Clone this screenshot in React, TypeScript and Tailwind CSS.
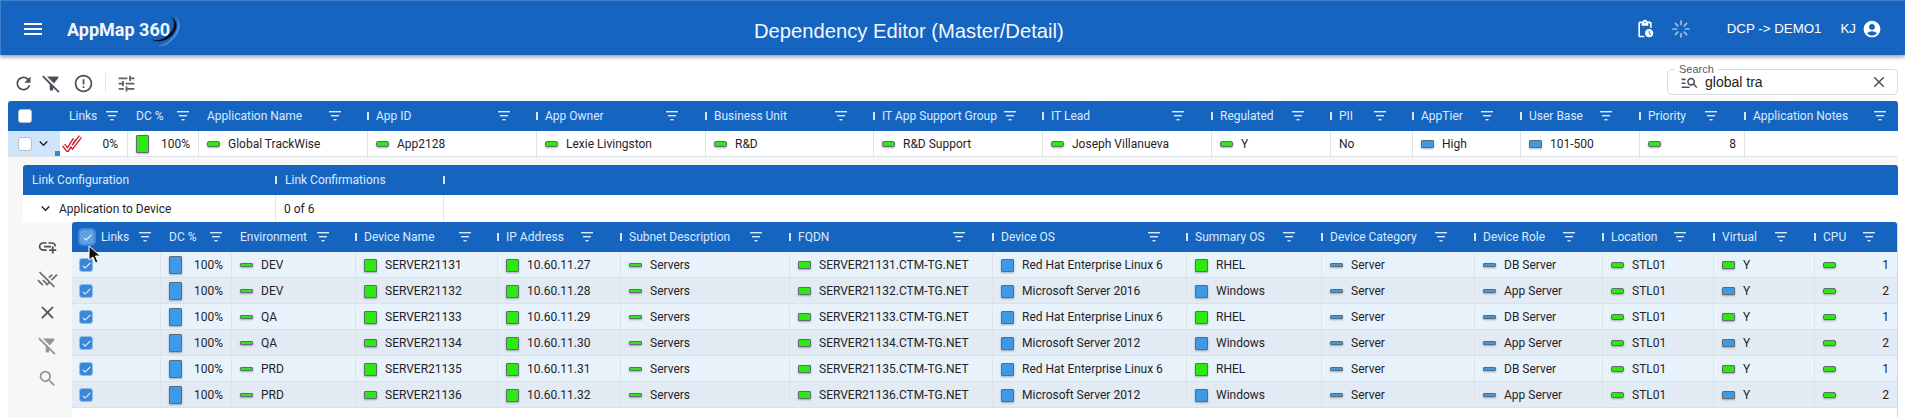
import { MdMenu, MdRefresh, MdErrorOutline, MdTune, MdManageSearch, MdClose, MdKeyboardArrowDown, MdPendingActions, MdAccountCircle, MdAddLink, MdRemoveDone, MdSearch, MdCheck, MdFilterAltOff } from 'react-icons/md';

const uiFont = "font-['Roboto',sans-serif]";

type Col = { label: string; w: string; pr: string };
type Mark = 'bar' | 'mid' | 'flat' | 'square' | 'tall';
type Cell = { text?: string; mark?: Mark; color?: 'g' | 'b'; right?: boolean };

const outerCols: Col[] = [
  { label: 'Links', w: 'w-[67px]', pr: 'pr-[9px]' },
  { label: 'DC %', w: 'w-[71px]', pr: 'pr-[9px]' },
  { label: 'Application Name', w: 'w-[169px]', pr: 'pr-[26px]' },
  { label: 'App ID', w: 'w-[169px]', pr: 'pr-[26px]' },
  { label: 'App Owner', w: 'w-[169px]', pr: 'pr-[27px]' },
  { label: 'Business Unit', w: 'w-[168px]', pr: 'pr-[26px]' },
  { label: 'IT App Support Group', w: 'w-[169px]', pr: 'pr-[26px]' },
  { label: 'IT Lead', w: 'w-[169px]', pr: 'pr-[27px]' },
  { label: 'Regulated', w: 'w-[119px]', pr: 'pr-[26px]' },
  { label: 'PII', w: 'w-[82px]', pr: 'pr-[26px]' },
  { label: 'AppTier', w: 'w-[108px]', pr: 'pr-[27px]' },
  { label: 'User Base', w: 'w-[119px]', pr: 'pr-[27px]' },
  { label: 'Priority', w: 'w-[105px]', pr: 'pr-[27px]' },
  { label: 'Application Notes', w: 'w-[154px]', pr: 'pr-[12px]' },
];

const outerRow: Cell[] = [
  { text: '0%', right: true },
  { text: '100%', mark: 'tall', color: 'g', right: true },
  { text: 'Global TrackWise', mark: 'bar', color: 'g' },
  { text: 'App2128', mark: 'bar', color: 'g' },
  { text: 'Lexie Livingston', mark: 'bar', color: 'g' },
  { text: 'R&D', mark: 'bar', color: 'g' },
  { text: 'R&D Support', mark: 'bar', color: 'g' },
  { text: 'Joseph Villanueva', mark: 'bar', color: 'g' },
  { text: 'Y', mark: 'bar', color: 'g' },
  { text: 'No' },
  { text: 'High', mark: 'mid', color: 'b' },
  { text: '101-500', mark: 'mid', color: 'b' },
  { text: '8', mark: 'bar', color: 'g', right: true },
  {},
];

const innerCols: Col[] = [
  { label: 'Links', w: 'w-[88px]', pr: 'pr-[9px]' },
  { label: 'DC %', w: 'w-[71px]', pr: 'pr-[9px]' },
  { label: 'Environment', w: 'w-[124px]', pr: 'pr-[26px]' },
  { label: 'Device Name', w: 'w-[142px]', pr: 'pr-[26px]' },
  { label: 'IP Address', w: 'w-[123px]', pr: 'pr-[27px]' },
  { label: 'Subnet Description', w: 'w-[169px]', pr: 'pr-[27px]' },
  { label: 'FQDN', w: 'w-[203px]', pr: 'pr-[27px]' },
  { label: 'Device OS', w: 'w-[194px]', pr: 'pr-[26px]' },
  { label: 'Summary OS', w: 'w-[135px]', pr: 'pr-[26px]' },
  { label: 'Device Category', w: 'w-[153px]', pr: 'pr-[27px]' },
  { label: 'Device Role', w: 'w-[128px]', pr: 'pr-[27px]' },
  { label: 'Location', w: 'w-[111px]', pr: 'pr-[27px]' },
  { label: 'Virtual', w: 'w-[101px]', pr: 'pr-[27px]' },
  { label: 'CPU', w: 'w-[83px]', pr: 'pr-[22px]' },
];

const devices = [
  { env: 'DEV', name: 'SERVER21131', nameMark: 'square', ip: '10.60.11.27', os: 'Red Hat Enterprise Linux 6', sum: 'RHEL', role: 'DB Server', virtual: 'g', cpu: '1' },
  { env: 'DEV', name: 'SERVER21132', nameMark: 'square', ip: '10.60.11.28', os: 'Microsoft Server 2016', sum: 'Windows', role: 'App Server', virtual: 'b', cpu: '2' },
  { env: 'QA', name: 'SERVER21133', nameMark: 'square', ip: '10.60.11.29', os: 'Red Hat Enterprise Linux 6', sum: 'RHEL', role: 'DB Server', virtual: 'g', cpu: '1' },
  { env: 'QA', name: 'SERVER21134', nameMark: 'mid', ip: '10.60.11.30', os: 'Microsoft Server 2012', sum: 'Windows', role: 'App Server', virtual: 'b', cpu: '2' },
  { env: 'PRD', name: 'SERVER21135', nameMark: 'square', ip: '10.60.11.31', os: 'Red Hat Enterprise Linux 6', sum: 'RHEL', role: 'DB Server', virtual: 'g', cpu: '1' },
  { env: 'PRD', name: 'SERVER21136', nameMark: 'mid', ip: '10.60.11.32', os: 'Microsoft Server 2012', sum: 'Windows', role: 'App Server', virtual: 'b', cpu: '2' },
];

function StatusMark({ mark, color }: { mark: Mark; color: 'g' | 'b' }) {
  const size = {
    flat: 'w-[13px] h-[4px] rounded-[1px]',
    bar: 'w-[13px] h-[6px] rounded-[2px]',
    mid: 'w-[13px] h-[8px] rounded-[1px]',
    square: 'w-[13px] h-[13px] rounded-[1px]',
    tall: 'w-[13px] h-[18px] rounded-[1px]',
  }[mark];
  const fill = color === 'g' ? 'bg-[#2bea10]' : 'bg-[#3e9ae6]';
  return <span className={`shrink-0 ${size} ${fill} border border-[#5f6b75] shadow-[0_1px_2px_rgba(0,0,0,0.3)]`} />;
}

function SortLines() {
  return (
    <svg width="12" height="10" viewBox="0 0 12 10" className="shrink-0 block">
      <rect x="0" y="0" width="12" height="1.4" fill="#dbeafe" />
      <rect x="2" y="4" width="8" height="1.4" fill="#dbeafe" />
      <rect x="4.5" y="8" width="3" height="1.4" fill="#dbeafe" />
    </svg>
  );
}

function Handle() {
  return <span className="absolute left-0 top-[11px] h-[8px] w-[2px] bg-[#d6e6f7]" />;
}

function HeaderCell({ col, handle, lead }: { col: Col; handle: boolean; lead?: boolean }) {
  return (
    <div className={`${col.w} ${col.pr} shrink-0 h-full flex items-center relative pl-[9px]`}>
      {handle && <Handle />}
      {lead && (
        <span className="mr-[7px] -ml-px w-[14px] h-[14px] rounded-[3px] bg-[#5f9fe3] shadow-[0_0_0_2px_rgba(120,170,230,0.5)] flex items-center justify-center shrink-0">
          <MdCheck className="text-white" size={11} />
        </span>
      )}
      <span className={`text-[12px] text-[#dbeafe] whitespace-nowrap ${uiFont}`}>{col.label}</span>
      <span className="ml-auto">
        <SortLines />
      </span>
    </div>
  );
}

function DataCell({ col, cell, bordered }: { col: Col; cell: Cell; bordered: boolean }) {
  return (
    <div className={`${col.w} shrink-0 h-full flex items-center pl-[8px] pr-[8px] gap-[8px] ${bordered ? 'border-l border-[#dde3e9]' : ''}`}>
      {cell.mark && <StatusMark mark={cell.mark} color={cell.color ?? 'g'} />}
      {cell.text && (
        <span className={`text-[12px] text-[#1f2328] whitespace-nowrap ${uiFont} ${cell.right ? 'ml-auto' : ''}`}>{cell.text}</span>
      )}
    </div>
  );
}

function Checkbox({ checked }: { checked?: boolean }) {
  if (checked) {
    return (
      <span className="w-[14px] h-[14px] rounded-[3px] bg-[#3c86d8] border border-[#8cc0f0] flex items-center justify-center shrink-0">
        <MdCheck className="text-white" size={11} />
      </span>
    );
  }
  return <span className="w-[14px] h-[14px] rounded-[3px] bg-white border border-[#b8c0c8] shrink-0" />;
}

function RedChecks() {
  const d = 'M1.5 10 L5.5 15 L12.5 4 M9 10 L10.5 12 L18.5 1.5';
  return (
    <svg width="20" height="17" viewBox="0 0 20 17" className="shrink-0">
      <path d={d} fill="none" stroke="#c4202a" strokeWidth="4" strokeLinejoin="miter" />
      <path d={d} fill="none" stroke="#ffffff" strokeWidth="1.3" strokeLinejoin="miter" />
    </svg>
  );
}

function LoadingDots() {
  return (
    <svg width="18" height="18" viewBox="0 0 18 18" className="text-[#9dbfe6] block" stroke="currentColor" strokeWidth="1.7" strokeLinecap="round">
      <path d="M9 1v3.5M9 13.5V17M1 9h3.5M13.5 9H17M3.4 3.4l2.4 2.4M12.2 12.2l2.4 2.4M3.4 14.6l2.4-2.4M12.2 5.8l2.4-2.4" />
    </svg>
  );
}

function Swoosh() {
  return (
    <svg width="30" height="33" viewBox="0 0 30 33" className="-ml-[19px] mt-[3px] shrink-0">
      <path d="M23 1 C30 6 31 15 24 23 C18 30 12 33 7 32 C14 31 20 26 24 20 C28 13 28 6 23 1 Z" fill="#4b93dc" />
      <path d="M19 2 C26 6 28 13 22 20 C16 27 7 30 0 25 C7 28 14 25 19 19 C24 13 25 7 19 2 Z" fill="#0d0f14" />
    </svg>
  );
}

export default function App() {
  return (
    <div className="w-[1905px] h-[417px] overflow-hidden bg-white flex flex-col">
      <header className="h-[55px] shrink-0 bg-[#1565c0] shadow-[0_2px_4px_rgba(0,0,0,0.4)] flex items-center pl-[20px] pr-[23px] pt-[2px] relative z-10 border-t border-l border-[#3f81cd]">
        <MdMenu className="text-white" size={24} />
        <span className="ml-[22px] text-[18px] font-bold text-[#f2f6fb] font-['Roboto',sans-serif]">AppMap 360</span>
        <Swoosh />
        <h1 className="absolute left-[753px] top-[15px] text-[20.2px] text-[#f4f7fb] font-['Liberation_Sans',sans-serif] whitespace-nowrap">Dependency Editor (Master/Detail)</h1>
        <div className="ml-auto flex items-center">
          <MdPendingActions className="text-white" size={20} />
          <span className="ml-[17px]"><LoadingDots /></span>
          <span className="ml-[37px] text-[13.3px] text-white font-['Liberation_Sans',sans-serif]">DCP -&gt; DEMO1</span>
          <span className="ml-[19px] text-[13.3px] text-white font-['Liberation_Sans',sans-serif]">KJ</span>
          <MdAccountCircle className="ml-[6px] text-white" size={20} />
        </div>
      </header>

      <div className="h-[46px] shrink-0 flex items-center pl-[13px] pr-[7px]">
        <div className="flex items-center mt-[10px]">
          <MdRefresh className="text-[#4a5159]" size={21} />
          <MdFilterAltOff className="ml-[7px] text-[#4a5159]" size={21} />
          <MdErrorOutline className="ml-[11px] text-[#4a5159]" size={21} />
          <span className="ml-[11px] h-[20px] w-px bg-[#e5e7ea]" />
          <MdTune className="ml-[10px] text-[#5a6168]" size={21} />
        </div>
        <div className="ml-auto w-[231px] h-[26px] mt-[8px] rounded-[5px] border border-[#d5dadf] relative flex items-center pl-[12px] pr-[9px]">
          <span className="absolute left-[7px] -top-[7px] bg-white px-[4px] text-[11px] leading-[12px] text-[#555c63] font-['Liberation_Sans',sans-serif]">Search</span>
          <MdManageSearch className="text-[#4a5159]" size={19} />
          <span className="ml-[6px] text-[14px] text-[#1a1d20] font-['Liberation_Sans',sans-serif]">global tra</span>
          <MdClose className="ml-auto text-[#4a5159]" size={18} />
        </div>
      </div>

      <div className="flex-1 bg-[#f7f7f7] ml-[8px] mr-[7px] min-h-0 flex flex-col">
        <div className="h-[30px] shrink-0 bg-[#1565c0] rounded-t-[3px] flex items-center">
          <div className="w-[52px] shrink-0 pl-[10px] flex items-center">
            <Checkbox />
          </div>
          {outerCols.map((col, i) => (
            <HeaderCell key={col.label} col={col} handle={i > 2} />
          ))}
        </div>

        <div className="h-[26px] shrink-0 bg-white border-b border-[#dde3e9] flex items-center">
          <div className="w-[52px] h-full shrink-0 bg-[#cfe5fb] pl-[10px] flex items-center gap-[3px] relative">
            <Checkbox />
            <MdKeyboardArrowDown className="text-[#1f2328]" size={17} />
            <span className="absolute right-0 bottom-0 w-[5px] h-[5px] bg-[#3c86d8]" />
          </div>
          <div className={`${outerCols[0].w} shrink-0 h-full flex items-center pl-[2px] pr-[9px]`}>
            <RedChecks />
            <span className={`ml-auto text-[12px] text-[#1f2328] ${uiFont}`}>0%</span>
          </div>
          {outerCols.slice(1).map((col, i) => (
            <DataCell key={col.label} col={col} cell={outerRow[i + 1]} bordered />
          ))}
        </div>

        <div className="mt-[8px] ml-[15px] flex-1 min-h-0 flex flex-col">
          <div className="h-[30px] shrink-0 bg-[#1565c0] rounded-t-[3px] flex items-center">
            <div className={`w-[252px] shrink-0 pl-[9px] text-[12px] text-[#dbeafe] ${uiFont}`}>Link Configuration</div>
            <div className={`w-[168px] shrink-0 h-full relative flex items-center pl-[10px] text-[12px] text-[#dbeafe] ${uiFont}`}>
              <Handle />
              Link Confirmations
            </div>
            <span className="h-[8px] w-[2px] bg-[#d6e6f7]" />
          </div>
          <div className="h-[27px] shrink-0 bg-white flex items-center">
            <div className="w-[253px] h-full shrink-0 flex items-center pl-[14px] gap-[5px] border-r border-[#e5e9ed]">
              <MdKeyboardArrowDown className="text-[#1f2328]" size={17} />
              <span className={`text-[12px] text-[#1f2328] ${uiFont}`}>Application to Device</span>
            </div>
            <div className={`w-[168px] h-full shrink-0 flex items-center pl-[8px] text-[12px] text-[#1f2328] border-r border-[#e5e9ed] ${uiFont}`}>0 of 6</div>
          </div>

          <div className="flex-1 min-h-0 flex">
            <div className="w-[49px] shrink-0 flex flex-col items-center pt-[14px] gap-[12px]">
              <MdAddLink size={21} className="text-[#4a5159]" />
              <MdRemoveDone size={21} className="text-[#6a7076]" />
              <MdClose size={21} className="text-[#4a5159]" />
              <MdFilterAltOff size={21} className="text-[#90969c]" />
              <MdSearch size={21} className="text-[#90969c]" />
            </div>

            <div className="flex-1 min-w-0 bg-white relative border-r border-[#c9d9e8]">
              <div className="h-[30px] bg-[#1565c0] rounded-t-[3px] flex items-center">
                {innerCols.map((col, i) => (
                  <HeaderCell key={col.label} col={col} handle={i > 2} lead={i === 0} />
                ))}
              </div>
              {devices.map((d, i) => {
                const cells: Cell[] = [
                  {},
                  { text: '100%', mark: 'tall', color: 'b', right: true },
                  { text: d.env, mark: 'flat', color: 'g' },
                  { text: d.name, mark: d.nameMark as Mark, color: 'g' },
                  { text: d.ip, mark: 'square', color: 'g' },
                  { text: 'Servers', mark: 'flat', color: 'g' },
                  { text: `${d.name}.CTM-TG.NET`, mark: 'mid', color: 'g' },
                  { text: d.os, mark: 'square', color: 'b' },
                  { text: d.sum, mark: 'square', color: d.sum === 'RHEL' ? 'g' : 'b' },
                  { text: 'Server', mark: 'flat', color: 'b' },
                  { text: d.role, mark: 'flat', color: 'b' },
                  { text: 'STL01', mark: 'bar', color: 'g' },
                  { text: 'Y', mark: 'mid', color: d.virtual as 'g' | 'b' },
                  { text: d.cpu, mark: 'bar', color: 'g', right: true },
                ];
                return (
                  <div key={d.name} className={`h-[26px] pt-[1px] flex items-center border-b border-[#d8e2eb] ${i % 2 === 0 ? 'bg-[#e8f2fb]' : 'bg-[#e2eaf3]'}`}>
                    <div className={`${innerCols[0].w} shrink-0 h-full flex items-center pl-[7px]`}>
                      <Checkbox checked />
                    </div>
                    {innerCols.slice(1).map((col, j) => (
                      <DataCell key={col.label} col={col} cell={cells[j + 1]} bordered />
                    ))}
                  </div>
                );
              })}
              <svg width="16" height="20" viewBox="0 0 16 20" className="absolute left-[16px] top-[23px]">
                <path d="M1 1 L1 15 L5 12 L7.5 18 L10 17 L7.5 11 L12.5 11 Z" fill="#111" stroke="#fff" strokeWidth="1" />
              </svg>
            </div>
          </div>
        </div>
      </div>
    </div>
  );
}
